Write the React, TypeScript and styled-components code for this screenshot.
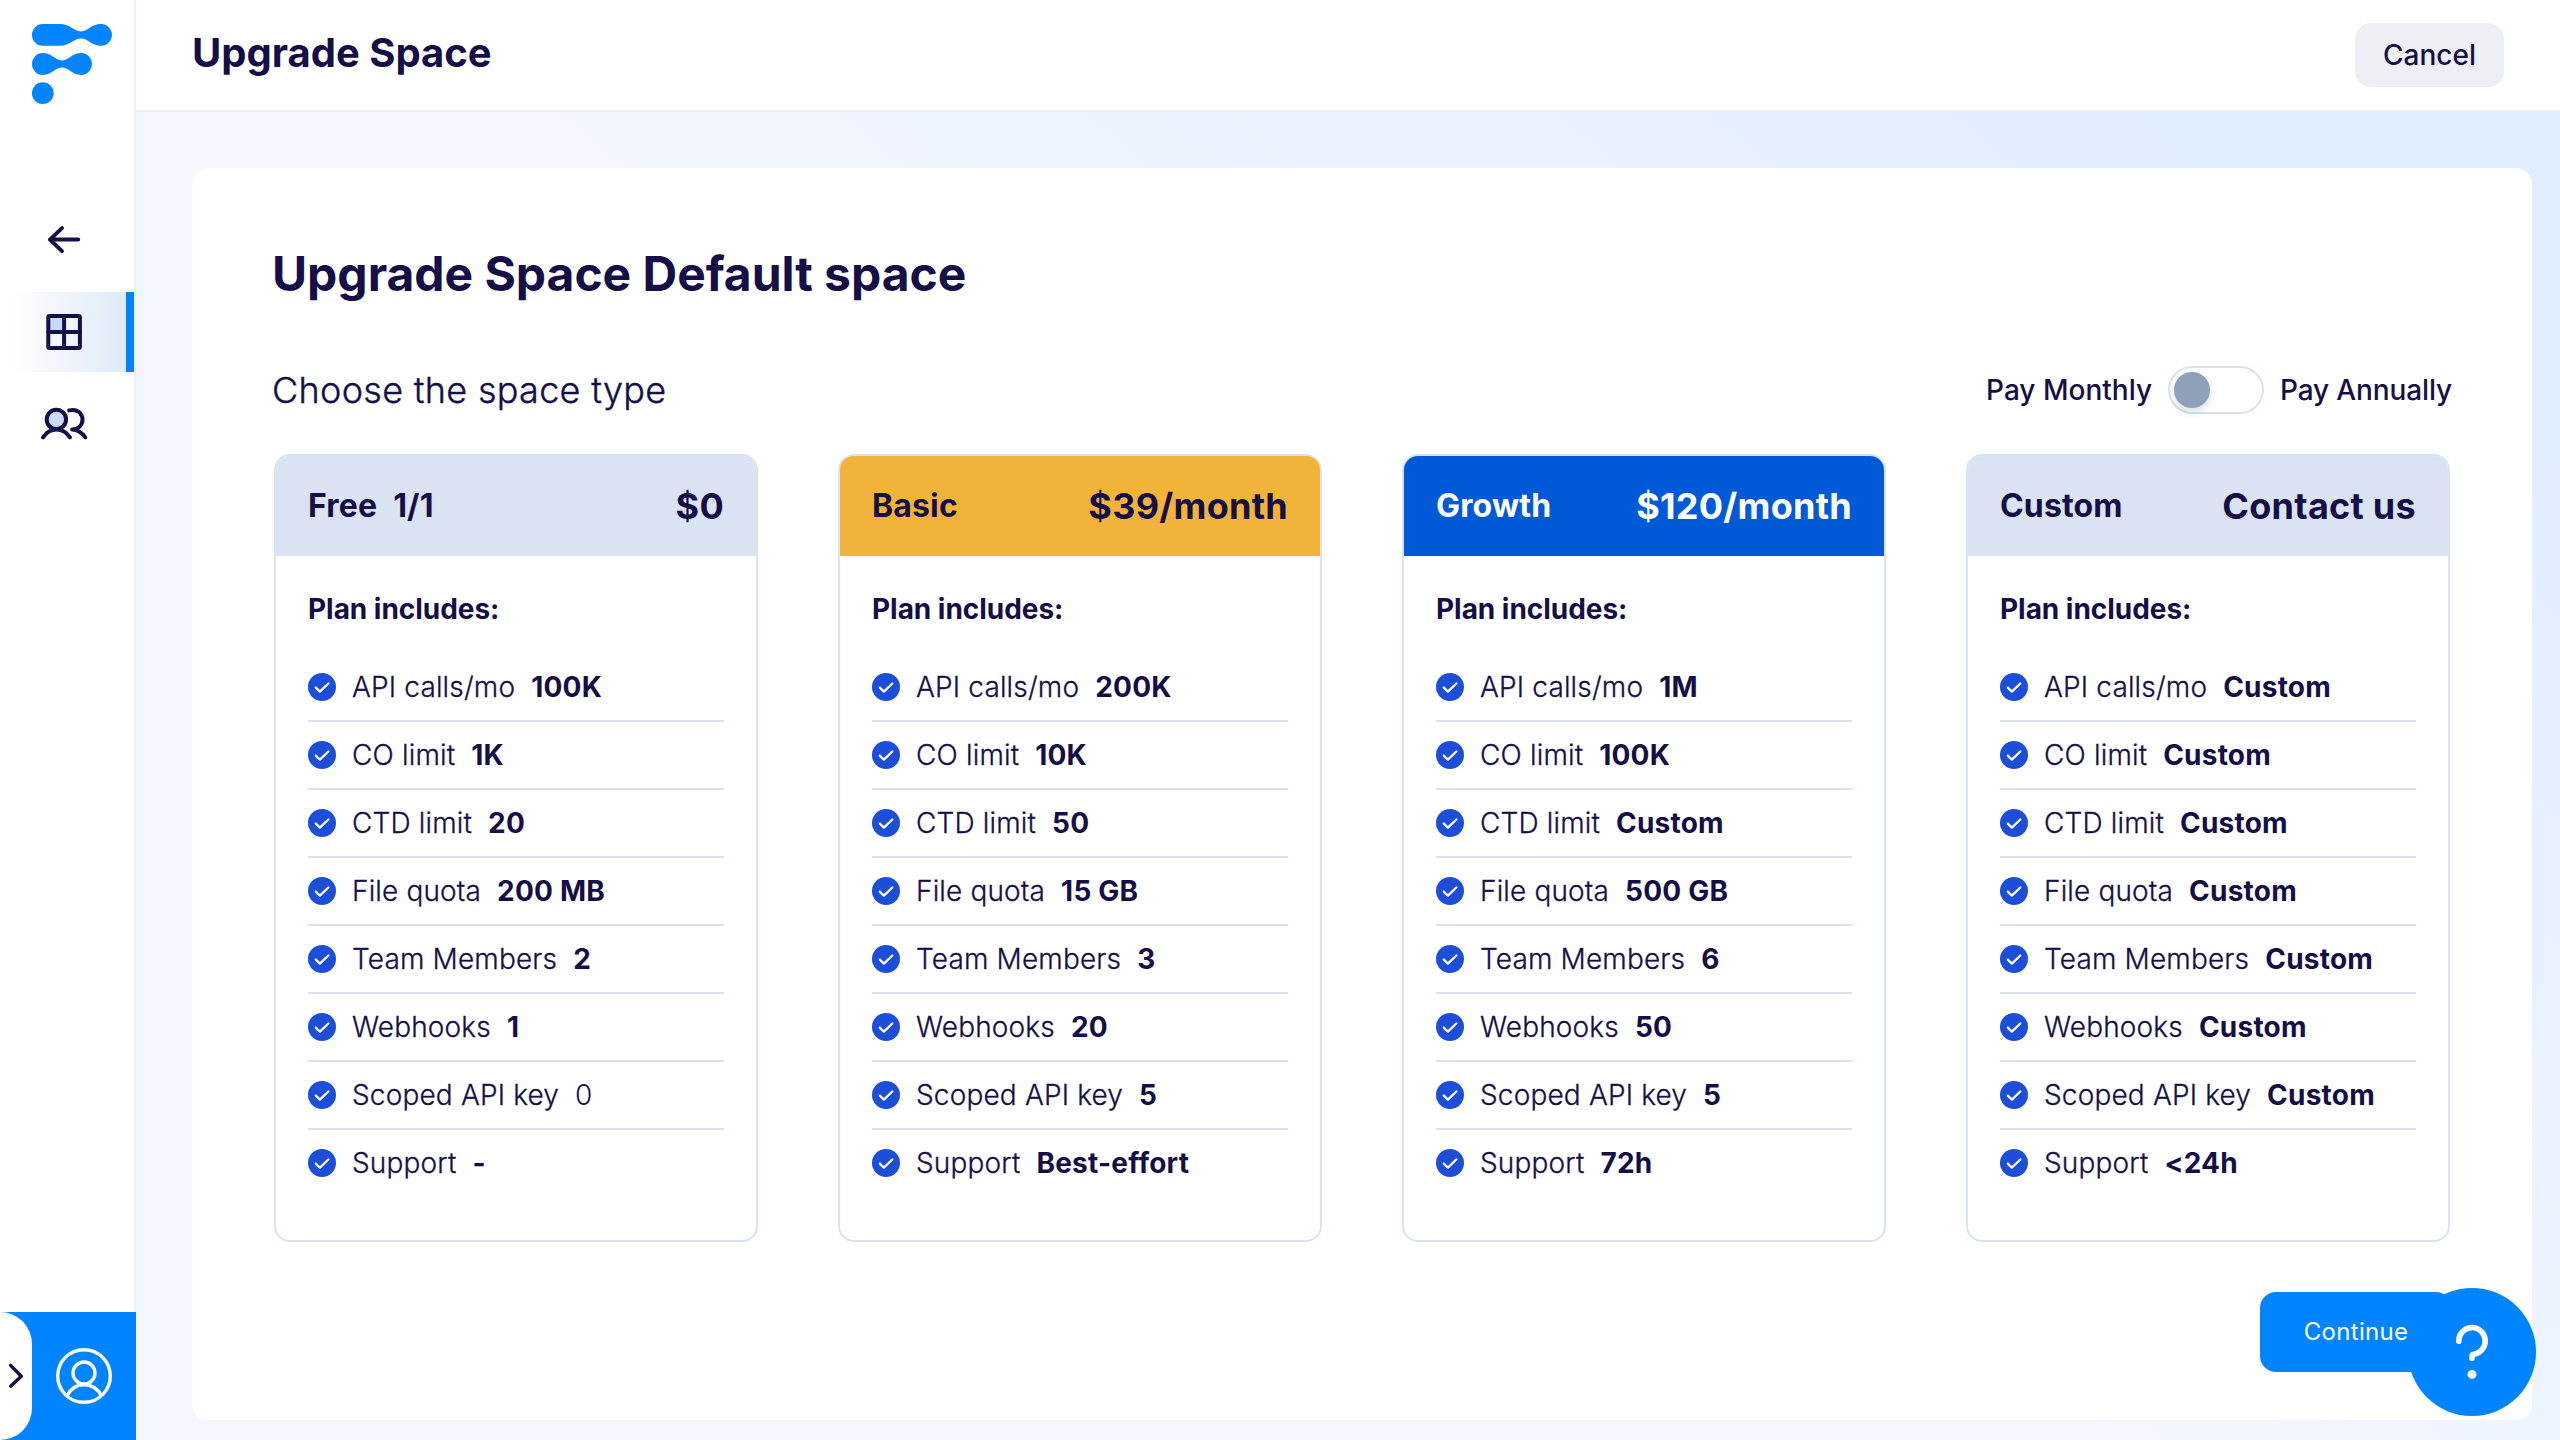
import React, { useState } from "react";
import styled, { createGlobalStyle } from "styled-components";

const color = {
  ink: "#160f47",
  brand: "#0084ff",
  check: "#1c4ed8",
  line: "#d9e3f2",
  muted: "#eeeef5",
};

const GlobalStyle = createGlobalStyle`
  *, *::before, *::after { box-sizing: border-box; }
  body {
    margin: 0;
    color: ${color.ink};
    background: #fff;
    font-family: Inter, "Liberation Sans", sans-serif;
    -webkit-font-smoothing: antialiased;
  }
  h1, h2, h3, ul { margin: 0; padding: 0; }
  button { font: inherit; border: 0; cursor: pointer; }
`;

const Shell = styled.div`
  display: grid;
  grid-template-columns: 136px 1fr;
  width: 2560px;
  height: 1440px;
  overflow: hidden;
`;

const Sidebar = styled.aside`
  display: flex;
  flex-direction: column;
  background: linear-gradient(${color.muted}, ${color.muted}) right / 2px 100% no-repeat #fff;
`;

const LogoLink = styled.a`
  display: block;
  height: 104px;
  padding: 24px 0 0 32px;
  svg { display: block; }
`;

const Nav = styled.nav`
  display: flex;
  flex-direction: column;
  gap: 12px;
  flex: 1;
  padding-top: 96px;
`;

const NavItem = styled.a<{ $active?: boolean }>`
  display: flex;
  align-items: center;
  justify-content: center;
  width: 134px;
  height: 80px;
  padding: ${p => (p.$active ? "0 0 0 2px" : "0 6px 0 0")};
  border-right: ${p => (p.$active ? `8px solid ${color.brand}` : "0")};
  background: ${p => (p.$active ? "linear-gradient(90deg, #fff 8%, #dfeaf8 100%)" : "none")};
`;

const NavIcon = styled.svg`
  display: block;
  width: 48px;
  height: 48px;
  fill: none;
  stroke: ${color.ink};
  stroke-width: 4;
  stroke-linecap: round;
  stroke-linejoin: round;
  overflow: visible;
`;

const Account = styled.div`
  display: flex;
  height: 128px;
  background: ${color.brand};
`;

const Expand = styled.button`
  width: 32px;
  height: 128px;
  padding: 0;
  background: #fff;
  border-radius: 0 32px 32px 0;
  svg { display: block; }
`;

const Avatar = styled.div`
  display: flex;
  flex: 1;
  align-items: center;
  justify-content: center;
`;

const Main = styled.div`
  display: flex;
  flex-direction: column;
  min-width: 0;
`;

const TopBar = styled.header`
  display: flex;
  align-items: center;
  justify-content: space-between;
  height: 112px;
  padding: 0 56px;
  background: #fff;
  border-bottom: 2px solid ${color.muted};
`;

const PageTitle = styled.h1`
  padding-bottom: 5px;
  font-size: 40px;
  font-weight: 700;
  line-height: 48px;
`;

const CancelButton = styled.button`
  height: 64px;
  padding: 0 28px;
  border-radius: 16px;
  background: ${color.muted};
  color: ${color.ink};
  font-size: 28px;
  font-weight: 500;
`;

const Canvas = styled.main`
  flex: 1;
  padding: 56px 28px 20px 56px;
  background: linear-gradient(39.6deg, #f4f7ff 48%, #e0edff 90%);
`;

const Panel = styled.section`
  display: flex;
  flex-direction: column;
  height: 1252px;
  padding: 77px 80px 48px;
  border-radius: 16px;
  background: #fff;
`;

const Heading = styled.h2`
  font-size: 48px;
  font-weight: 700;
  letter-spacing: -0.03px;
  line-height: 58px;
`;

const Chooser = styled.div`
  display: flex;
  align-items: center;
  justify-content: space-between;
  height: 48px;
  margin-top: 63px;
`;

const Subheading = styled.p`
  margin: 0;
  font-size: 36px;
  font-weight: 300;
  letter-spacing: 0.3px;
  line-height: 44px;
  -webkit-text-stroke: 0.4px currentColor;
`;

const Billing = styled.div`
  display: flex;
  align-items: center;
  gap: 16px;
  font-size: 28px;
  font-weight: 500;
`;

const AnnualLabel = styled.span`
  letter-spacing: -0.13px;
`;

const Switch = styled.button`
  display: flex;
  align-items: center;
  width: 96px;
  height: 48px;
  padding: 0 4px;
  border: 2px solid ${color.line};
  border-radius: 24px;
  background: #fff;
`;

const Knob = styled.span<{ $on: boolean }>`
  width: 36px;
  height: 36px;
  margin-left: ${p => (p.$on ? "auto" : 0)};
  border-radius: 50%;
  background: #8fa1b9;
  box-shadow: 0 4px 8px rgba(0, 35, 11, 0.14);
`;

const Plans = styled.div`
  display: grid;
  grid-template-columns: repeat(4, 484px);
  gap: 80px;
  margin-top: 40px;
  padding: 0 2px;
`;

const PlanCard = styled.article`
  height: 788px;
  border: 2px solid ${color.line};
  border-radius: 16px;
  overflow: hidden;
`;

const PlanHeader = styled.header<{ $bg: string; $fg: string }>`
  display: flex;
  align-items: center;
  justify-content: space-between;
  height: 100px;
  padding: 0 32px;
  background: ${p => p.$bg};
  color: ${p => p.$fg};
  font-weight: 700;
`;

const PlanName = styled.h3`
  display: flex;
  gap: 16px;
  padding-bottom: 2px;
  font-size: 32px;
  letter-spacing: 0.15px;
`;

const Price = styled.span`
  font-size: 36px;
  letter-spacing: 0.28px;
`;

const PlanBody = styled.div`
  padding: 32px 32px 0;
`;

const Includes = styled.div`
  margin-bottom: 24px;
  font-size: 28px;
  font-weight: 700;
  letter-spacing: -0.04px;
  line-height: 42px;
`;

const Features = styled.ul`
  list-style: none;
`;

const Feature = styled.li`
  display: flex;
  align-items: center;
  gap: 16px;
  height: 68px;
  border-bottom: 2px solid ${color.line};
  font-size: 28px;
  white-space: nowrap;
  &:last-child { border-bottom-color: transparent; }
`;

const FeatureName = styled.span`
  font-weight: 300;
  letter-spacing: 0.16px;
  -webkit-text-stroke: 0.3px currentColor;
`;

const Value = styled.span<{ $light?: boolean }>`
  font-weight: ${p => (p.$light ? 300 : 700)};
  letter-spacing: 0.22px;
`;

const Actions = styled.footer`
  display: flex;
  justify-content: flex-end;
  margin-top: 50px;
`;

const ContinueButton = styled.button`
  width: 192px;
  height: 80px;
  padding: 0 0 2px;
  border-radius: 16px;
  background: ${color.brand};
  color: #fff;
  font-size: 24px;
  font-weight: 400;
  letter-spacing: 0.3px;
`;

const HelpButton = styled.button`
  position: fixed;
  left: 2408px;
  top: 1288px;
  width: 128px;
  height: 128px;
  padding: 0;
  border-radius: 50%;
  background: ${color.brand};
  svg { display: block; }
`;

const Logo = () => (
  <svg width="80" height="80" viewBox="0 0 80 80" fill={color.brand}>
    <path d="M10.8 0H28C38 0 42 7.4 49 7.4S59 0 69 0a10.9 10.9 0 0 1 0 21.8C59 21.8 56 14.6 49 14.6S38 21.8 28 21.8H10.8a10.9 10.9 0 0 1 0-21.8Z" />
    <path d="M10.8 29.1C20 29.1 23 36.4 30 36.4S40 29.1 49 29.1a10.9 10.9 0 0 1 0 21.8C40 50.9 37 43.6 30 43.6S20 50.9 10.8 50.9a10.9 10.9 0 0 1 0-21.8Z" />
    <circle cx="10.8" cy="69.1" r="10.9" />
  </svg>
);

const BackIcon = () => (
  <NavIcon viewBox="0 0 48 48">
    <path d="M38.2 23.6H10M22 12.1 10 23.6 22 35.1" />
  </NavIcon>
);

const SpacesIcon = () => (
  <NavIcon viewBox="0 0 48 48">
    <path d="M9 9h15v15H9z" fill="#c5daf6" stroke="none" />
    <rect x="8.3" y="8" width="31.6" height="32" rx="1.2" />
    <path d="M24.1 8v32M8.3 24h31.6" />
  </NavIcon>
);

const MembersIcon = () => (
  <NavIcon viewBox="0 0 48 48">
    <circle cx="16.4" cy="19.4" r="9.7" fill="#cbddf6" />
    <path d="M3 37.4C6.4 32.2 11 29.5 16.4 29.5S26.6 32.2 30 37.4" />
    <path d="M29.2 10.4c7.6-2 13.3 2.7 13.3 9.2 0 5.6-4 9.9-10.4 9.9 5.2.3 9.9 3.3 13.2 7.9" />
  </NavIcon>
);

const ExpandIcon = () => (
  <svg width="32" height="128" viewBox="0 0 32 128" fill="none" stroke={color.ink} strokeWidth="3.4" strokeLinecap="round" strokeLinejoin="round">
    <path d="M10.6 53.4 21.3 64.2 10.6 74.2" />
  </svg>
);

const UserIcon = () => (
  <svg width="56" height="56" viewBox="0 0 56 56" fill="none" stroke="#fff" strokeWidth="3.4">
    <circle cx="28" cy="28" r="26.3" />
    <circle cx="28" cy="25" r="11" />
    <path d="M11.3 47.5C15 40.5 21 36.8 28 36.8S41.5 40.5 45.3 47.5" />
  </svg>
);

const CheckIcon = () => (
  <svg width="28" height="28" viewBox="0 0 28 28" fill="none">
    <circle cx="14" cy="14" r="14" fill={color.check} />
    <path d="M7.8 14.6 11.9 18.6 20.3 10.5" stroke="#fff" strokeWidth="2.2" strokeLinecap="round" strokeLinejoin="round" />
  </svg>
);

const QuestionIcon = () => (
  <svg width="128" height="128" viewBox="0 0 128 128" fill="none">
    <path d="M50.8 53.3A13.2 13.4 0 1 1 66 66.2Q64 66.5 64 68.4V70.2" stroke="#fff" strokeWidth="5.6" strokeLinecap="round" />
    <circle cx="64" cy="86.4" r="4.5" fill="#fff" />
  </svg>
);

const featureNames = [
  "API calls/mo", "CO limit", "CTD limit", "File quota",
  "Team Members", "Webhooks", "Scoped API key", "Support",
];

interface Plan {
  name: string;
  usage?: string;
  price: string;
  bg: string;
  fg: string;
  values: string[];
}

const plans: Plan[] = [
  { name: "Free", usage: "1/1", price: "$0", bg: color.line, fg: color.ink, values: ["100K", "1K", "20", "200 MB", "2", "1", "0", "-"] },
  { name: "Basic", price: "$39/month", bg: "#f2b438", fg: color.ink, values: ["200K", "10K", "50", "15 GB", "3", "20", "5", "Best-effort"] },
  { name: "Growth", price: "$120/month", bg: "#005ad8", fg: "#fff", values: ["1M", "100K", "Custom", "500 GB", "6", "50", "5", "72h"] },
  { name: "Custom", price: "Contact us", bg: color.line, fg: color.ink, values: ["Custom", "Custom", "Custom", "Custom", "Custom", "Custom", "Custom", "<24h"] },
];

const PlanTile = ({ plan }: { plan: Plan }) => (
  <PlanCard>
    <PlanHeader $bg={plan.bg} $fg={plan.fg}>
      <PlanName>
        <span>{plan.name}</span>
        {plan.usage && <span>{plan.usage}</span>}
      </PlanName>
      <Price>{plan.price}</Price>
    </PlanHeader>
    <PlanBody>
      <Includes>Plan includes:</Includes>
      <Features>
        {featureNames.map((name, i) => (
          <Feature key={name}>
            <CheckIcon />
            <FeatureName>{name}</FeatureName>
            <Value $light={plan.values[i] === "0"}>{plan.values[i]}</Value>
          </Feature>
        ))}
      </Features>
    </PlanBody>
  </PlanCard>
);

export default function App() {
  const [annual, setAnnual] = useState(false);
  return (
    <Shell>
      <GlobalStyle />
      <Sidebar>
        <LogoLink><Logo /></LogoLink>
        <Nav>
          <NavItem><BackIcon /></NavItem>
          <NavItem $active><SpacesIcon /></NavItem>
          <NavItem><MembersIcon /></NavItem>
        </Nav>
        <Account>
          <Expand><ExpandIcon /></Expand>
          <Avatar><UserIcon /></Avatar>
        </Account>
      </Sidebar>
      <Main>
        <TopBar>
          <PageTitle>Upgrade Space</PageTitle>
          <CancelButton>Cancel</CancelButton>
        </TopBar>
        <Canvas>
          <Panel>
            <Heading>Upgrade Space Default space</Heading>
            <Chooser>
              <Subheading>Choose the space type</Subheading>
              <Billing>
                <span>Pay Monthly</span>
                <Switch onClick={() => setAnnual(!annual)}><Knob $on={annual} /></Switch>
                <AnnualLabel>Pay Annually</AnnualLabel>
              </Billing>
            </Chooser>
            <Plans>
              {plans.map(plan => <PlanTile key={plan.name} plan={plan} />)}
            </Plans>
            <Actions><ContinueButton>Continue</ContinueButton></Actions>
          </Panel>
        </Canvas>
      </Main>
      <HelpButton><QuestionIcon /></HelpButton>
    </Shell>
  );
}
